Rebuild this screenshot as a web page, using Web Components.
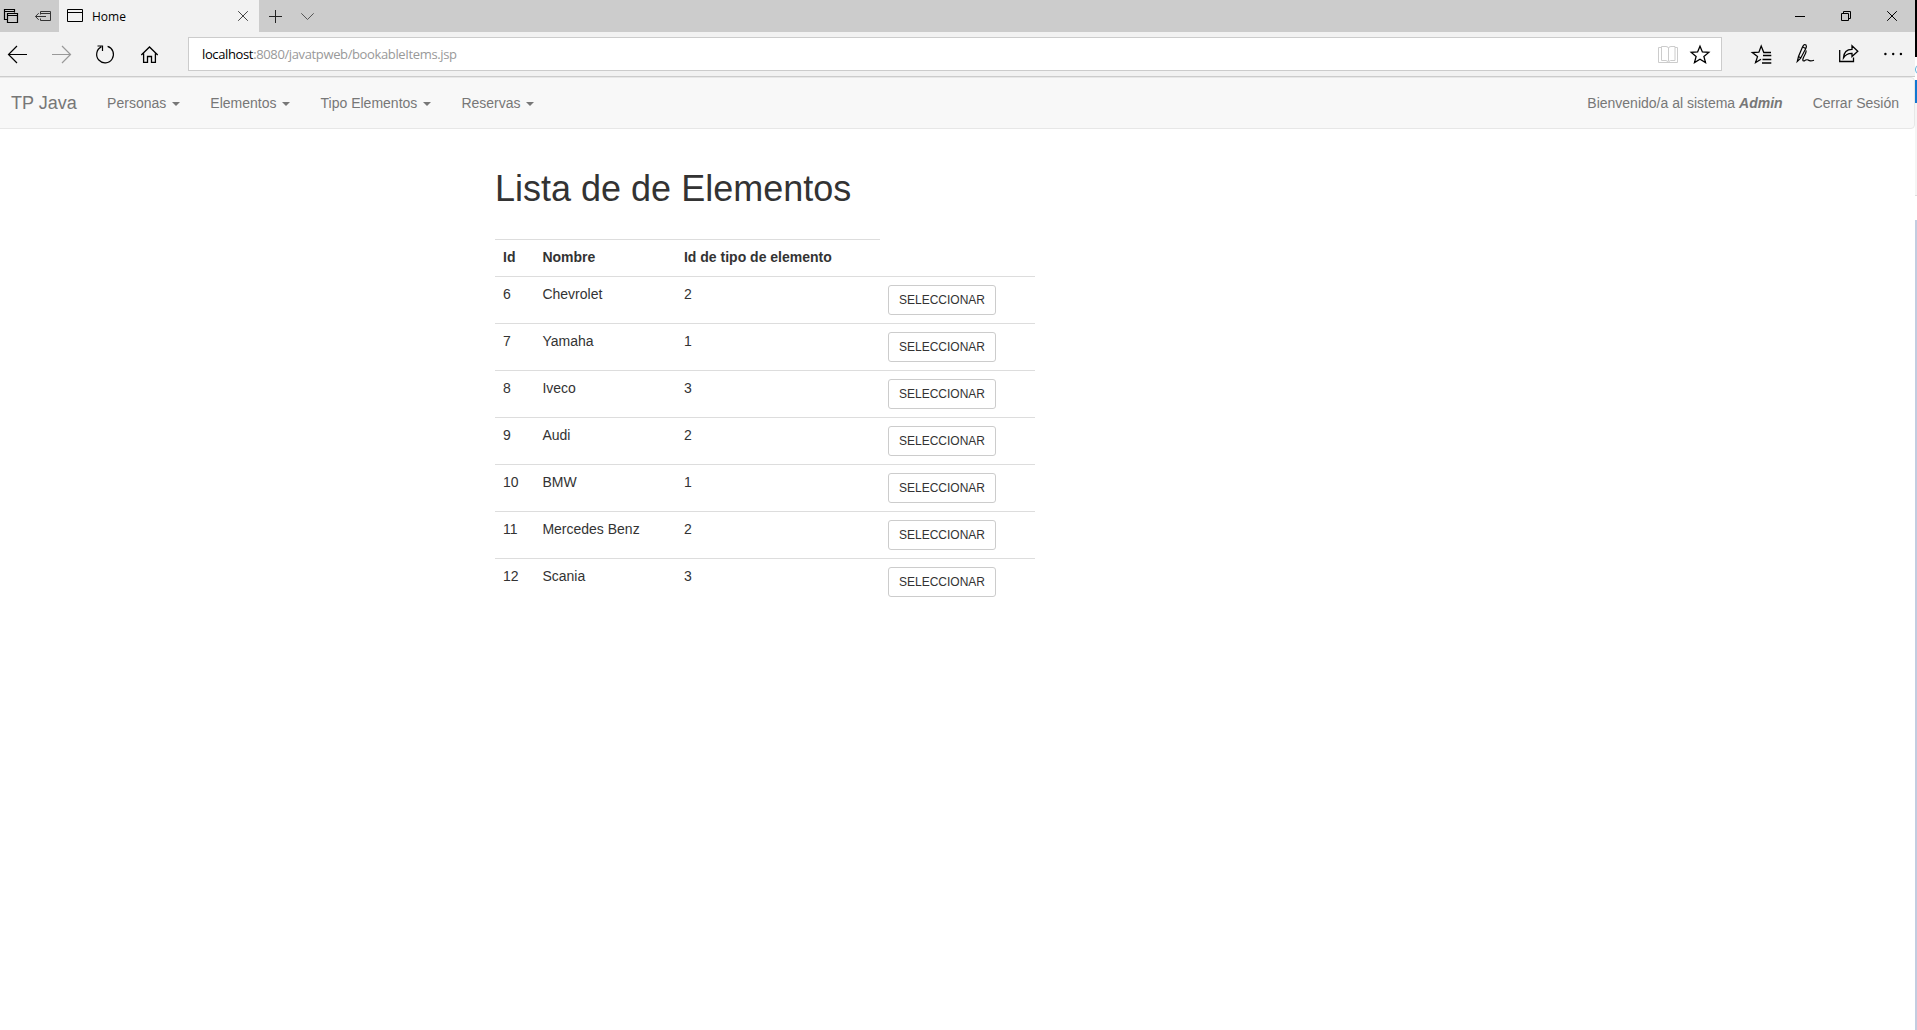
<!DOCTYPE html>
<html lang="es">
<head>
<meta charset="utf-8">
<title>Home</title>
<style>
html,body{margin:0;height:100%;overflow:hidden;background:#fff}
body{font:14px/20px "Liberation Sans",Arial,sans-serif;color:#333}
</style>
</head>
<body>
<app-screen>
  <browser-tabs slot="chrome">Home</browser-tabs>
  <browser-toolbar slot="chrome"><span slot="host">localhost</span><span slot="path">:8080/javatpweb/bookableItems.jsp</span></browser-toolbar>
  <site-navbar>
    <span slot="brand">TP Java</span>
    <nav-item caret>Personas</nav-item>
    <nav-item caret>Elementos</nav-item>
    <nav-item caret>Tipo Elementos</nav-item>
    <nav-item caret>Reservas</nav-item>
    <nav-item slot="right">Bienvenido/a al sistema <b><i>Admin</i></b></nav-item>
    <nav-item slot="right">Cerrar Sesión</nav-item>
  </site-navbar>
  <item-list>Lista de de Elementos</item-list>
  <edge-strip slot="side"></edge-strip>
</app-screen>
<script>
const define = (name, html, init) => customElements.define(name, class extends HTMLElement {
  constructor() {
    super();
    this.attachShadow({ mode: 'open' }).innerHTML = html;
  }
  connectedCallback() { if (init) init(this, this.shadowRoot); }
});

/* Each icon: [viewBox, markup]; the viewBox also gives the size of its cell. */
const star = 'M1700 46.2 L1702.4 52 L1708.8 52.4 L1703.9 56.5 L1705.5 62.6 L1700 59.3 L1694.5 62.6 L1696.1 56.5 L1691.2 52.4 L1697.6 52Z';
const icons = {
  tabs: ['0 0 27 32', '<path d="M7.5 19.5H4.5V9.5H14.5V12.5M4 11.5H15" stroke-width="1.2"/><path d="M7.5 13.5H17.5V22.5H7.5ZM7 15.5H18" stroke-width="1.2"/>'],
  aside: ['27 0 32 32', '<g stroke="#333"><path d="M40.5 14.5V11.5H50.5V20.5H40.5V18.5M40 13.5H51M35.5 16.5H46M38.7 13.2L35.5 16.5L38.7 19.8"/></g>'],
  page: ['59 0 33 32', '<path d="M67.5 9.5H82.5V21.5H67.5ZM67 12.5H83"/>'],
  closetab: ['227 0 32 32', '<path stroke="#444" d="M238.2 11.2L247.8 20.8M247.8 11.2L238.2 20.8"/>'],
  plus: ['259 0 32 32', '<path stroke="#222" d="M269 16.5H282M275.5 10V23"/>'],
  chevron: ['291 0 32 32', '<path stroke="#555" d="M301.3 13.3L307.5 19.5L313.7 13.3"/>'],
  min: ['1777 0 46 32', '<path d="M1795 16.5H1805"/>'],
  restore: ['1823 0 46 32', '<path d="M1841.5 13.5H1848.5V20.5H1841.5ZM1843.5 13.5V11.5H1850.5V18.5H1848.5"/>'],
  close: ['1869 0 46 32', '<path d="M1887.2 11.2L1896.8 20.8M1896.8 11.2L1887.2 20.8"/>'],
  back: ['0 32 40 44', '<path stroke-width="1.2" d="M8.5 54.5H27M17 46L8.5 54.5L17 63"/>'],
  forward: ['40 32 44 44', '<path stroke="#999" stroke-width="1.2" d="M52 54.5H70.5M62 46L70.5 54.5L62 63"/>'],
  refresh: ['84 32 44 44', '<path stroke-width="1.2" d="M107.6 46.4A8.4 8.4 0 1 1 101.3 46.9M97.5 46H102.5V51"/>'],
  home: ['128 32 44 44', '<path stroke-width="1.3" d="M141.3 55L149.5 47L157.7 55M143.6 53.5V62.3H147.5V56.5H151.5V62.3H155.4V53.5"/>'],
  book: ['1652 38 32 32', '<g stroke="#ccc"><path d="M1661.5 47.5H1658.5V62.5H1677.5V47.5H1675M1668.5 48V61M1661.5 46.5H1666Q1668.5 46.5 1668.5 48.5Q1668.5 46.5 1671 46.5H1675V60.5H1670.5L1668.5 61.8L1666 60.5H1661.5Z"/></g>'],
  star: ['1684 38 32 32', '<path stroke-width="1.3" d="' + star + '"/>'],
  favs: ['1739 32 44 44', '<path stroke-width="1.3" d="M1771 52.5H1763.8L1761.2 46L1758.9 52.2L1752.3 52.5L1757.5 56.6L1755.6 62.6L1761 59.2M1763 55.5H1771.3M1762.5 59.5H1771.3M1762 63H1771.3"/>'],
  pen: ['1783 32 44 44', '<path stroke-width="1.2" d="M1797.3 61.5L1798.5 56.5L1802.5 47Q1804 43.5 1806 45Q1807 46.5 1805.8 48.5L1800.5 58.5ZM1798.5 56.5L1801 58M1802.8 47L1805.6 48.5M1806 50.5Q1806.6 52 1803.7 57Q1801.7 61.3 1804.2 61Q1806.3 59.2 1808.2 60Q1810 61.8 1814 60.2"/>'],
  share: ['1827 32 44 44', '<path stroke-width="1.3" d="M1839.7 50V61.5H1853.5V57.5M1843.5 57.8Q1844 49.5 1852 49.4V45.8L1857.8 51.2L1852 56.6V53.4Q1846.5 53.2 1843.5 57.8Z"/>'],
  more: ['1871 32 44 44', '<g fill="#000" stroke="none"><circle cx="1885.4" cy="54" r="1.2"/><circle cx="1893.2" cy="54" r="1.2"/><circle cx="1900.9" cy="54" r="1.2"/></g>']
};
define('ui-icon', '<style>:host{display:block;flex:none}svg{display:block}</style>', (el, root) => {
  const [box, body] = icons[el.getAttribute('name')];
  const [, , w, h] = box.split(' ');
  root.innerHTML += `<svg width="${w}" height="${h}" viewBox="${box}" fill="none" stroke="#000">${body}</svg>`;
});

define('app-screen', `<style>
  :host{display:flex;height:100vh;background:#fff}
  main{flex:1;min-width:0;overflow:hidden}
</style><main><slot name="chrome"></slot><slot></slot></main><slot name="side"></slot>`);

define('browser-tabs', `<style>
  :host{display:flex;height:32px;background:#ccc;color:#000;font:12px/34px "Open Sans","Noto Sans",sans-serif}
  .tab{display:flex;width:200px;background:#f2f2f2}
  .title{flex:1}
  .gap{flex:1}
</style><ui-icon name="tabs"></ui-icon><ui-icon name="aside"></ui-icon>
<div class="tab"><ui-icon name="page"></ui-icon><span class="title"><slot></slot></span><ui-icon name="closetab"></ui-icon></div>
<ui-icon name="plus"></ui-icon><ui-icon name="chevron"></ui-icon><span class="gap"></span>
<ui-icon name="min"></ui-icon><ui-icon name="restore"></ui-icon><ui-icon name="close"></ui-icon>`);

define('browser-toolbar', `<style>
  :host{display:flex;height:44px;background:#f2f2f2;border-bottom:1px solid #ccc}
  .address{box-sizing:border-box;display:flex;flex:1;height:34px;margin:5px 17px 0 16px;padding:0 5px 0 13px;border:1px solid #ccc;background:#fff;
    font:13px/33px "Open Sans","Noto Sans",sans-serif;letter-spacing:-.37px;color:#999}
  .host{color:#000}
  .text{flex:1;white-space:nowrap}
</style><ui-icon name="back"></ui-icon><ui-icon name="forward"></ui-icon><ui-icon name="refresh"></ui-icon><ui-icon name="home"></ui-icon>
<div class="address"><div class="text"><span class="host"><slot name="host"></slot></span><slot name="path"></slot></div><ui-icon name="book"></ui-icon><ui-icon name="star"></ui-icon></div>
<ui-icon name="favs"></ui-icon><ui-icon name="pen"></ui-icon><ui-icon name="share"></ui-icon><ui-icon name="more"></ui-icon>`);

define('site-navbar', `<style>
  :host{box-sizing:border-box;display:flex;height:52px;margin-left:-5px;background:#f8f8f8;border:1px solid #e7e7e7;border-radius:4px;color:#777}
  .brand{padding:15px 15.4px 15px 15px;font-size:18px;line-height:20px}
  .left{display:flex;flex:1;gap:.2px}
  .right{display:flex}
</style><div class="brand"><slot name="brand"></slot></div><div class="left"><slot></slot></div><div class="right"><slot name="right"></slot></div>`);

define('nav-item', `<style>
  :host{display:block;padding:15px;white-space:nowrap}
  .caret{display:none;margin-left:2px;vertical-align:middle;border-top:4px solid;border-left:4px solid transparent;border-right:4px solid transparent}
  :host([caret]) .caret{display:inline-block}
</style><slot></slot> <span class="caret"></span>`);

define('select-button', `<style>
  :host{display:block}
  button{display:block;box-sizing:border-box;width:108px;height:30px;margin:0;padding:5px 0;border:1px solid #ccc;border-radius:3px;background:#fff;
    color:#333;font:12px/18px "Liberation Sans",Arial,sans-serif;text-align:center}
</style><button><slot></slot></button>`);

const rows = [[6, 'Chevrolet', 2], [7, 'Yamaha', 1], [8, 'Iveco', 3], [9, 'Audi', 2], [10, 'BMW', 1], [11, 'Mercedes Benz', 2], [12, 'Scania', 3]];
define('item-list', `<style>
  :host{display:block;width:540px;padding:40px 0 0 495px}
  h1{margin:0 0 30px;font-size:36px;line-height:40px;font-weight:500}
  .row{display:grid;grid-template-columns:39.4px 141.6px 204px 155px}
  .row>*{padding:7px 8px 9px;border-top:1px solid #ddd}
  .row>.action{padding:8px}
  .head{font-weight:700}
</style><h1><slot></slot></h1>
<div class="row head"><div>Id</div><div>Nombre</div><div>Id de tipo de elemento</div></div>
${rows.map(r => `<div class="row">${r.map(c => `<div>${c}</div>`).join('')}<div class="action"><select-button>SELECCIONAR</select-button></div></div>`).join('')}`);

define('edge-strip', `<style>
  :host{display:flex;flex-direction:column;flex:none;width:2px;overflow:hidden;background:#fff}
  .dark{height:57px;background:#000}
  .ring{box-sizing:border-box;width:8px;height:9px;margin:8px 0 6px;border:1px solid #5fb2dd;border-radius:4px}
  .blue{height:23px;background:#1177d1}
  .pale{height:92px;background:#f5f5f5;border-bottom:1px solid #ddd}
  .rest{flex:1;margin-top:24px;background:#c3cde0}
</style><div class="dark"></div><div class="ring"></div><div class="blue"></div><div class="pale"></div><div class="rest"></div>`);
</script>
</body>
</html>
